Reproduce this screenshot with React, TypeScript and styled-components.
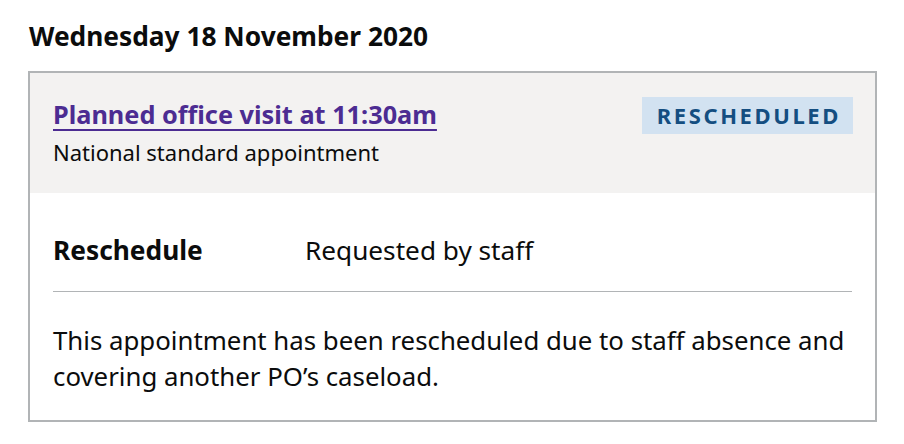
import React from 'react';
import styled, { createGlobalStyle } from 'styled-components';

const GlobalStyle = createGlobalStyle`
  body {
    margin: 0;
    background: #ffffff;
    font-family: "Noto Sans", "Liberation Sans", Arial, sans-serif;
    color: #0b0c0c;
    -webkit-font-smoothing: antialiased;
  }
`;

const Page = styled.div`
  padding: 18px 27px 20px 28px;
`;

const DateHeading = styled.h2`
  margin: 0 0 17px 1px;
  font-size: 26.3px;
  line-height: 36px;
  font-weight: 700;
`;

const Card = styled.section`
  border: 2px solid #b1b4b6;
`;

const CardHeader = styled.header`
  display: flex;
  justify-content: space-between;
  align-items: flex-start;
  gap: 24px;
  min-height: 120px;
  box-sizing: border-box;
  padding: 23px 22px 20px 23px;
  background: #f3f2f1;
`;

const TitleBlock = styled.div`
  display: flex;
  flex-direction: column;
`;

const TitleLink = styled.a`
  font-size: 25.3px;
  line-height: 36px;
  font-weight: 700;
  color: #4c2c92;
  text-decoration: underline;
  text-decoration-thickness: 2px;
  text-underline-offset: 5px;
  cursor: pointer;
`;

const Subtitle = styled.p`
  margin: 4px 0 0;
  font-size: 22px;
  line-height: 32px;
`;

const Tag = styled.strong<{ $tone: 'blue' | 'grey' }>`
  display: inline-block;
  margin-top: 1px;
  padding: 5px 12px 6px 15px;
  font-size: 22px;
  line-height: 26px;
  font-weight: 700;
  letter-spacing: 2.6px;
  text-transform: uppercase;
  color: ${p => (p.$tone === 'blue' ? '#144e81' : '#383f43')};
  background: ${p => (p.$tone === 'blue' ? '#d2e2f1' : '#eeefef')};
`;

const CardBody = styled.div`
  padding: 28px 23px 26px;
`;

const SummaryList = styled.dl`
  margin: 0;
`;

const SummaryRow = styled.div`
  display: grid;
  grid-template-columns: 252px 1fr;
  padding: 11px 0 23px;
  border-bottom: 1px solid #b1b4b6;
`;

const SummaryKey = styled.dt`
  font-size: 26.3px;
  line-height: 36px;
  font-weight: 700;
`;

const SummaryValue = styled.dd`
  margin: 0;
  font-size: 26.2px;
  line-height: 36px;
`;

const Notes = styled.p`
  margin: 30px 0 0;
  font-size: 25.8px;
  line-height: 36px;
`;

export default function App() {
  return (
    <Page>
      <GlobalStyle />
      <DateHeading>Wednesday 18 November 2020</DateHeading>
      <Card>
        <CardHeader>
          <TitleBlock>
            <TitleLink href="#">Planned office visit at 11:30am</TitleLink>
            <Subtitle>National standard appointment</Subtitle>
          </TitleBlock>
          <Tag $tone="blue">Rescheduled</Tag>
        </CardHeader>
        <CardBody>
          <SummaryList>
            <SummaryRow>
              <SummaryKey>Reschedule</SummaryKey>
              <SummaryValue>Requested by staff</SummaryValue>
            </SummaryRow>
          </SummaryList>
          <Notes>
            This appointment has been rescheduled due to staff absence and covering another PO’s caseload.
          </Notes>
        </CardBody>
      </Card>
    </Page>
  );
}
